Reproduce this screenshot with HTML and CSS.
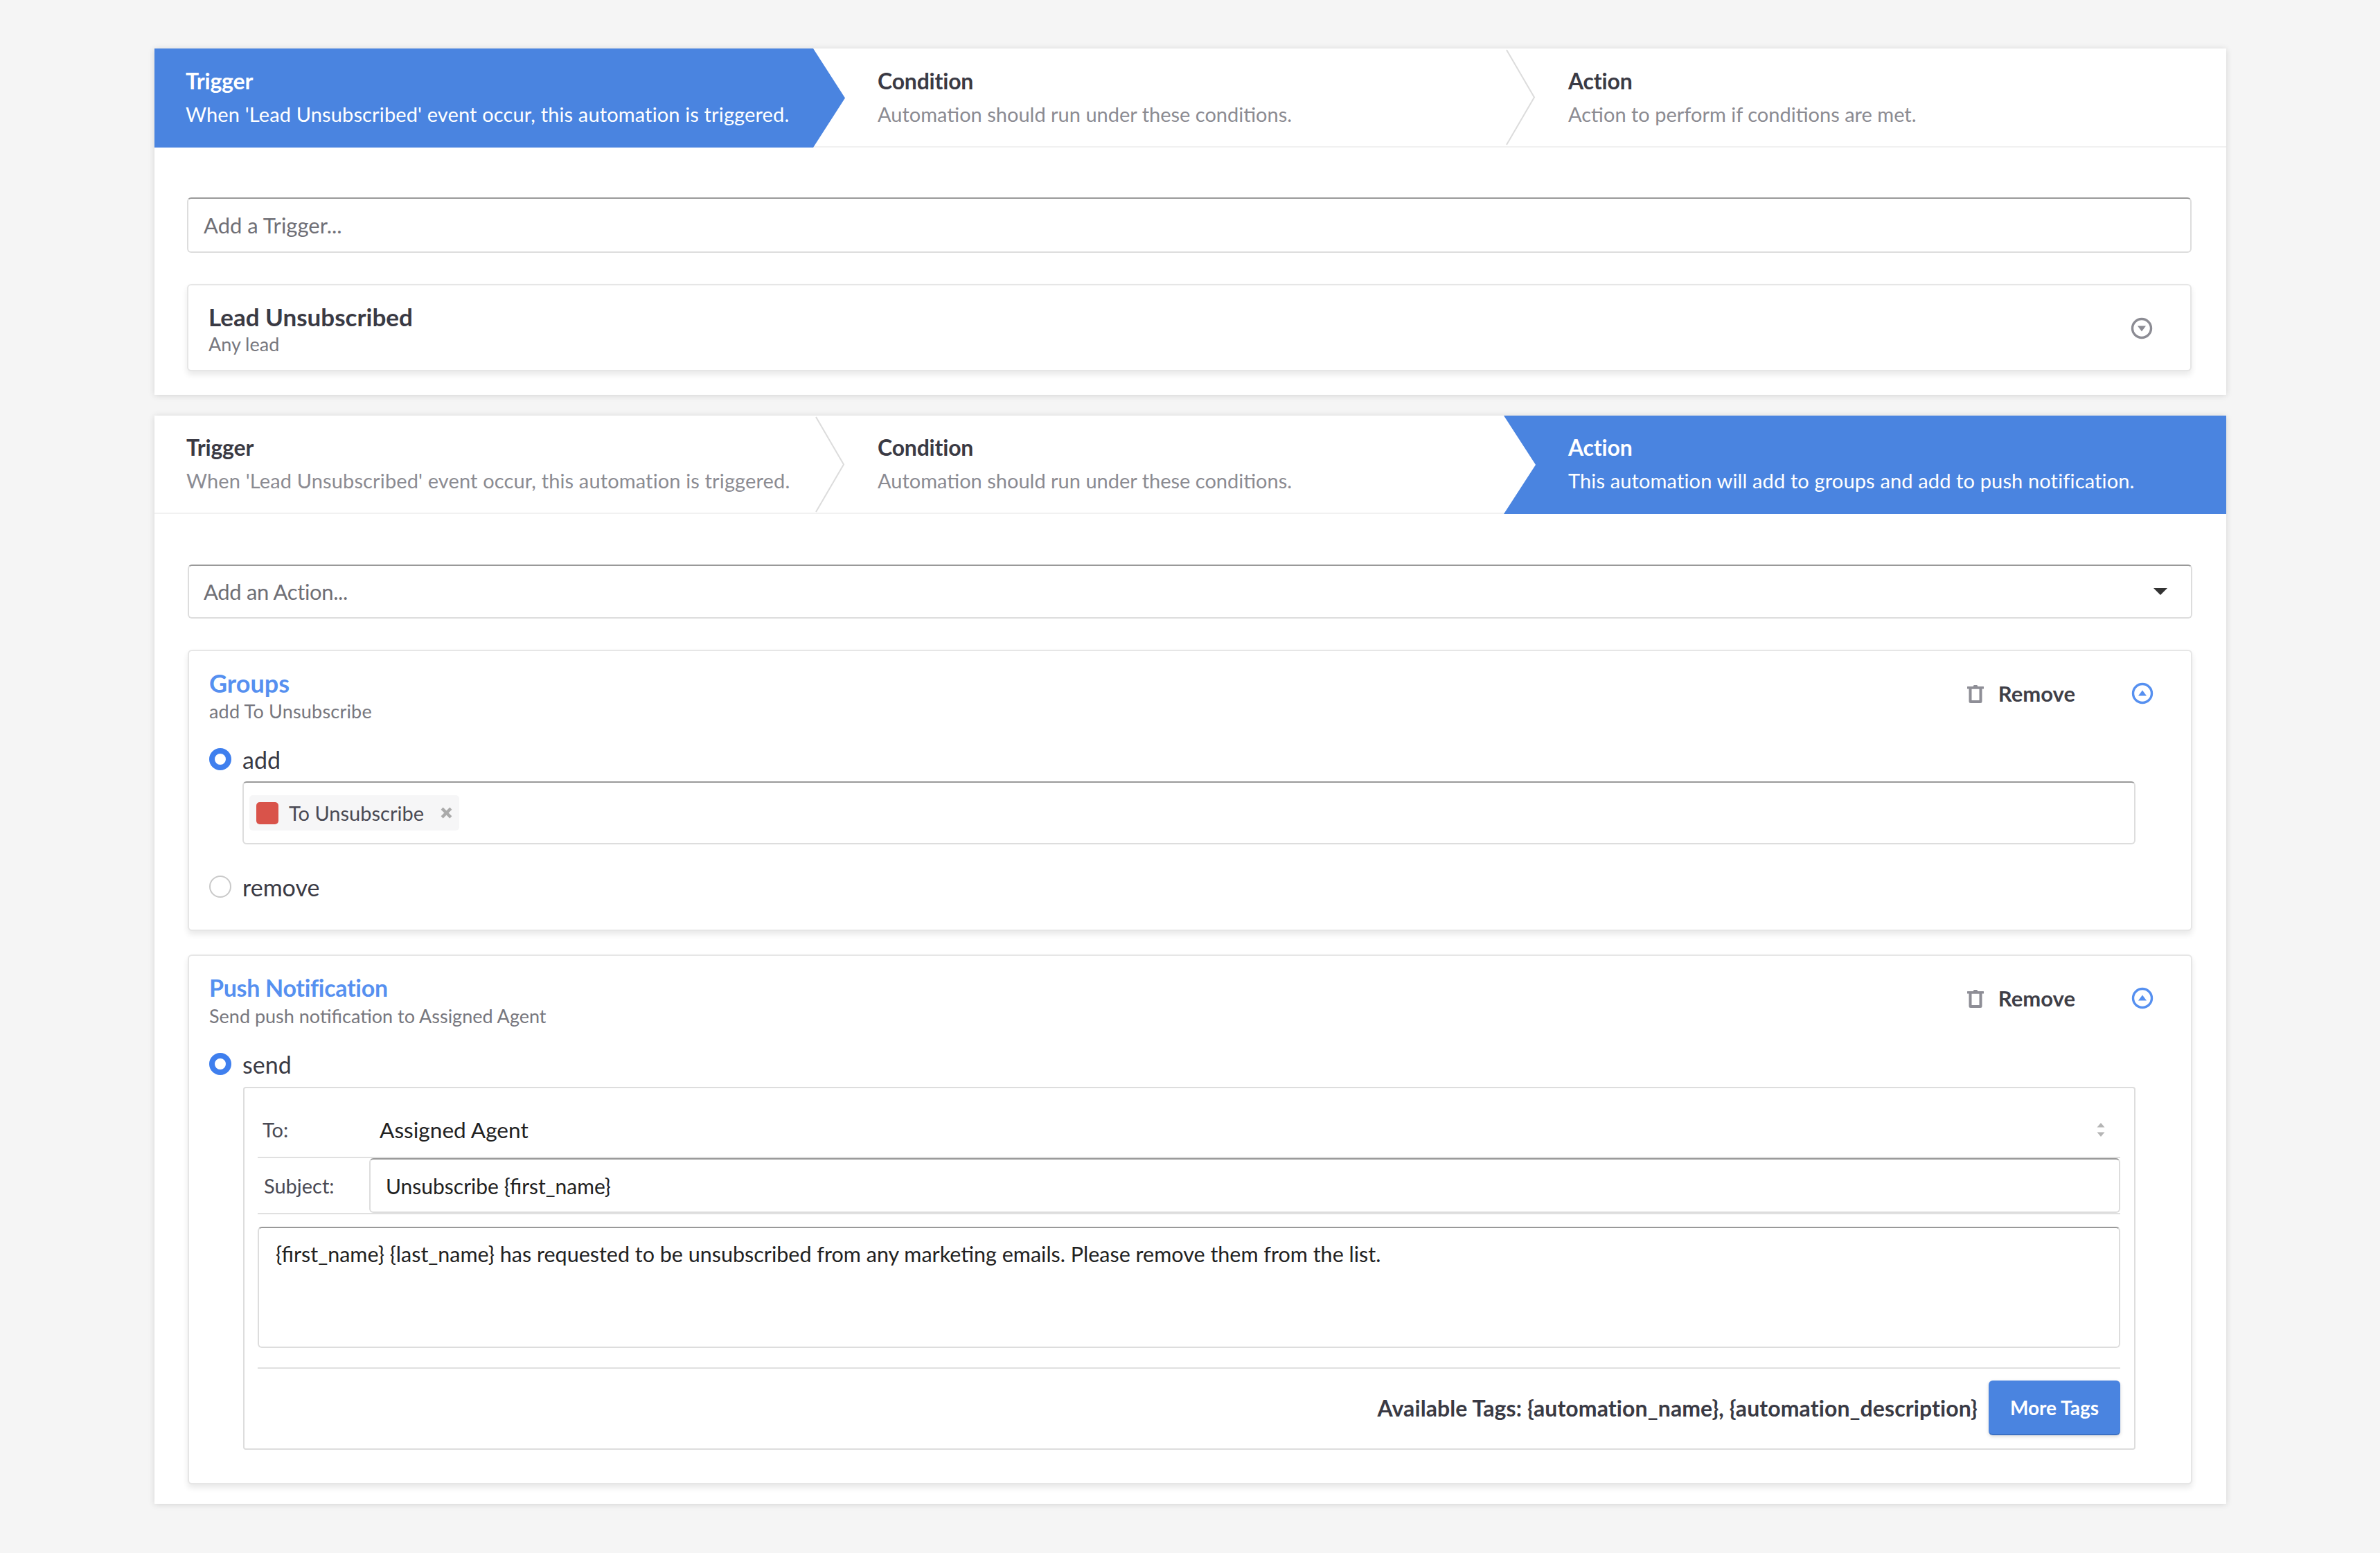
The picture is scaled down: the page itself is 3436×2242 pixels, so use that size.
FILE: index.html
```html
<!DOCTYPE html>
<html lang="en">
<head>
<meta charset="utf-8">
<title>Automation</title>
<link rel="stylesheet" href="styles.css">
</head>
<body>
<main class="page">
  <section class="panel">
    <div class="steps steps-tall">
      <div class="step step-first step-on">
        <div class="step-title">Trigger</div>
        <div class="step-desc step-desc-long">When 'Lead Unsubscribed' event occur, this automation is triggered.</div>
      </div>
      <div class="step">
        <div class="step-title">Condition</div>
        <div class="step-desc">Automation should run under these conditions.</div>
        <svg class="chev" viewBox="0 0 46 142" preserveAspectRatio="none"><path d="M3 2 L43 71 L3 140"/></svg>
      </div>
      <div class="step">
        <div class="step-title">Action</div>
        <div class="step-desc">Action to perform if conditions are met.</div>
      </div>
    </div>
    <div class="body body-one">
      <div class="field field-trigger">Add a Trigger...</div>
      <div class="card card-lead">
        <div class="card-head">
          <div class="head-text">
            <div class="card-title title-lead">Lead Unsubscribed</div>
            <div class="card-sub">Any lead</div>
          </div>
          <svg class="toggle toggle-grey" viewBox="0 0 32 32"><circle cx="16" cy="16" r="13.5"/><path class="tri" d="M10 12.5h12l-6 8z"/></svg>
        </div>
      </div>
    </div>
  </section>

  <section class="panel">
    <div class="steps">
      <div class="step">
        <div class="step-title">Trigger</div>
        <div class="step-desc step-desc-long">When 'Lead Unsubscribed' event occur, this automation is triggered.</div>
        <svg class="chev" viewBox="0 0 46 142" preserveAspectRatio="none"><path d="M3 2 L43 71 L3 140"/></svg>
      </div>
      <div class="step">
        <div class="step-title">Condition</div>
        <div class="step-desc">Automation should run under these conditions.</div>
      </div>
      <div class="step step-last step-on">
        <div class="step-title">Action</div>
        <div class="step-desc step-desc-long">This automation will add to groups and add to push notification.</div>
      </div>
    </div>
    <div class="body body-two">
      <div class="field field-action">
        <span>Add an Action...</span>
        <svg class="caret" viewBox="0 0 20 10"><path d="M0 0h20L10 10z"/></svg>
      </div>

      <div class="card card-groups">
        <div class="card-head">
          <div class="head-text">
            <div class="card-title card-title-blue">Groups</div>
            <div class="card-sub card-sub-wide">add To Unsubscribe</div>
          </div>
          <div class="head-tools">
            <svg class="trash" viewBox="0 0 24 27"><path d="M9 3V2.400C9 1.600 9.600 1 10.400 1h3.200c.8 0 1.400.6 1.400 1.400V3h8a1 1 0 0 1 0 3.400H1A1 1 0 0 1 1 3z"/><path d="M2.500 5h19v19.500a2.500 2.500 0 0 1-2.500 2.500H5a2.500 2.500 0 0 1-2.500-2.500zM6.500 6.500v16.500h11V6.500z" fill-rule="evenodd"/></svg>
            <span class="remove">Remove</span>
            <svg class="toggle toggle-blue" viewBox="0 0 32 32"><circle cx="16" cy="16" r="13.5"/><path class="tri" d="M10 19.500h12l-6-8z"/></svg>
          </div>
        </div>
        <div class="opts">
          <label class="opt opt-first"><i class="radio radio-on"></i>add</label>
          <div class="tags-box">
            <span class="tag"><i class="swatch"></i><span class="tag-text">To Unsubscribe</span>
              <svg class="tag-x" viewBox="0 0 16 16"><path d="M2 2l12 12M14 2L2 14"/></svg>
            </span>
          </div>
          <label class="opt opt-second"><i class="radio"></i>remove</label>
        </div>
      </div>

      <div class="card card-push">
        <div class="card-head">
          <div class="head-text">
            <div class="card-title card-title-blue title-push">Push Notification</div>
            <div class="card-sub">Send push notification to Assigned Agent</div>
          </div>
          <div class="head-tools">
            <svg class="trash" viewBox="0 0 24 27"><path d="M9 3V2.400C9 1.600 9.600 1 10.400 1h3.200c.8 0 1.400.6 1.400 1.400V3h8a1 1 0 0 1 0 3.400H1A1 1 0 0 1 1 3z"/><path d="M2.500 5h19v19.500a2.500 2.500 0 0 1-2.500 2.500H5a2.500 2.500 0 0 1-2.500-2.500zM6.500 6.500v16.500h11V6.500z" fill-rule="evenodd"/></svg>
            <span class="remove">Remove</span>
            <svg class="toggle toggle-blue" viewBox="0 0 32 32"><circle cx="16" cy="16" r="13.5"/><path class="tri" d="M10 19.500h12l-6-8z"/></svg>
          </div>
        </div>
        <div class="opts">
          <label class="opt opt-first"><i class="radio radio-on"></i>send</label>
          <div class="mail-box">
            <div class="mail-row mail-to">
              <span class="mail-label mail-label-to">To:</span>
              <span class="mail-value">Assigned Agent</span>
              <svg class="spin" viewBox="0 0 12 20"><path d="M6 0l5.500 6.500H.5zM6 20L.5 13.500h11z"/></svg>
            </div>
            <div class="mail-row mail-subject">
              <span class="mail-label mail-label-subject">Subject:</span>
              <div class="subject-input">Unsubscribe {first_name}</div>
            </div>
            <div class="mail-body">{first_name} {last_name} has requested to be unsubscribed from any marketing emails. Please remove them from the list.</div>
            <div class="mail-foot">
              <span class="avail">Available Tags: {automation_name}, {automation_description}</span>
              <span class="more-btn">More Tags</span>
            </div>
          </div>
        </div>
      </div>
    </div>
  </section>
</main>
</body>
</html>
```
FILE: styles.css
```css
* { box-sizing: border-box; }
html, body { margin: 0; padding: 0; }
body {
  background: #f5f5f5;
  font-family: "Lato", "Liberation Sans", sans-serif;
  color: #3a3a44;
}
.page {
  width: 2991px;
  margin-left: 223px;
  padding: 70px 0 70px;
  display: flex;
  flex-direction: column;
  gap: 30px;
}
.panel {
  background: #fff;
  box-shadow: 0 1px 9px rgba(0, 0, 0, .14);
}
.steps {
  display: grid;
  grid-template-columns: repeat(3, 1fr);
  height: 142px;
  border-bottom: 2px solid #f1f1f1;
}
.steps-tall { height: 143px; }
.step {
  position: relative;
  padding: 22px 0 0 46px;
  min-width: 0;
}
.step:nth-child(n+2) { padding-left: 47px; }
.steps-tall .step { padding-top: 23px; }
.step-title {
  font-size: 32px;
  font-weight: 700;
  line-height: 48px;
  color: #3a3a44;
  letter-spacing: -.2px;
}
.step-desc {
  font-size: 29px;
  line-height: 48px;
  color: #8b8b92;
  white-space: nowrap;
}
.step-desc-long { letter-spacing: .14px; }
.step-on {
  background: #4a84e0;
  margin-bottom: -2px;
}
.step-on .step-title, .step-on .step-desc { color: #fff; }
.step-first {
  padding-left: 45px;
  clip-path: polygon(0 0, calc(100% - 46px) 0, 100% 50%, calc(100% - 46px) 100%, 0 100%);
}
.step-last {
  margin-left: -46px;
  padding-left: 93px !important;
  clip-path: polygon(0 0, 100% 0, 100% 100%, 0 100%, 46px 50%);
}
.chev {
  position: absolute;
  top: 0;
  right: -1px;
  width: 46px;
  height: 141px;
  fill: none;
  stroke: #dcdcdc;
  stroke-width: 2;
}
.body-one { padding: 72px 50px 34px 47px; }
.body-two { padding: 73px 49px 28px 48px; }
.field {
  display: flex;
  align-items: center;
  justify-content: space-between;
  background: #fff;
  border: 2px solid #ddd;
  border-top-color: #999;
  border-radius: 6px;
  padding: 0 22px;
  font-size: 31px;
  color: #6f6f76;
}
.field-trigger { height: 80px; }
.field-action {
  height: 78px;
  padding: 0 34px 0 21px;
  letter-spacing: -.35px;
}
.caret { width: 20px; height: 10px; fill: #333; }
.card {
  background: #fff;
  border: 2px solid #e6e6e6;
  border-radius: 6px;
  box-shadow: 0 5px 9px rgba(0, 0, 0, .09);
}
.card-lead { margin-top: 45px; height: 126px; }
.card-groups { margin-top: 45px; height: 406px; }
.card-push { margin-top: 34px; height: 765px; }
.card-head {
  display: flex;
  justify-content: space-between;
  align-items: flex-start;
  padding: 24px 54px 0 29px;
}
.card-lead .card-head { padding-top: 23px; align-items: center; }
.head-tools {
  display: flex;
  align-items: center;
  height: 70px;
  margin-top: 2px;
}
.card-title {
  font-size: 36px;
  font-weight: 700;
  line-height: 44px;
  color: #3a3a44;
}
.title-lead { font-size: 35px; }
.title-push { font-size: 34px; letter-spacing: -.3px; }
.card-title-blue { color: #5690f0; }
.card-sub {
  font-size: 27px;
  line-height: 38px;
  color: #77777e;
}
.card-lead .card-sub { line-height: 36px; }
.card-sub-wide { letter-spacing: .2px; }
.toggle { width: 32px; height: 32px; display: block; }
.toggle circle { fill: none; stroke-width: 3.4; }
.toggle-grey circle { stroke: #8c8c94; }
.toggle-grey .tri { fill: #8c8c94; }
.toggle-blue circle { stroke: #5690f0; }
.toggle-blue .tri { fill: #5690f0; }
.toggle-grey { margin-top: -2px; }
.trash { width: 24px; height: 27px; fill: #8e8e96; }
.remove {
  font-size: 31px;
  font-weight: 700;
  color: #3f3f48;
  margin: 0 81px 0 21px;
}
.opts { padding: 0 80px 0 29px; }
.opt {
  display: flex;
  align-items: center;
  height: 44px;
  font-size: 34px;
  color: #3a3a44;
}
.opt-first { margin-top: 28px; }
.opt-second { margin-top: 39px; }
.radio {
  width: 32px;
  height: 32px;
  border-radius: 50%;
  border: 2px solid #c9c9c9;
  background: #fff;
  margin-right: 16px;
  flex: none;
}
.radio-on { border: 8px solid #3f7fee; }
.tags-box {
  margin: 10px 0 0 48px;
  height: 91px;
  border: 2px solid #ddd;
  border-top-color: #999;
  border-radius: 6px;
  padding: 18px 8px;
}
.tag {
  display: inline-flex;
  align-items: center;
  height: 51px;
  background: #f6f6f7;
  border-radius: 5px;
  padding: 0 10px;
  font-size: 29px;
  color: #4a4a54;
}
.swatch {
  width: 32px;
  height: 32px;
  background: #d9534a;
  border-radius: 5px;
  margin-right: 15px;
}
.tag-text { margin-right: 24px; }
.tag-x { width: 17px; height: 17px; fill: none; stroke: #aaa; stroke-width: 4; }
.mail-box {
  margin: 11px 0 0 49px;
  height: 524px;
  border: 2px solid #ddd;
  border-radius: 4px;
  padding: 0 20px 0 19px;
}
.mail-row { display: flex; align-items: center; }
.mail-to {
  height: 101px;
  padding-top: 20px;
  border-bottom: 2px solid #e0e0e0;
}
.mail-subject {
  height: 81px;
  border-bottom: 2px solid #e0e0e0;
}
.mail-label { font-size: 29px; color: #4a4a54; }
.mail-label-to { width: 176px; padding-left: 7px; flex: none; }
.mail-label-subject { width: 161px; padding-left: 9px; flex: none; }
.mail-value { font-size: 31.6px; color: #222; flex: 1; }
.spin { width: 12px; height: 20px; fill: #b5b5b5; margin-right: 22px; }
.subject-input {
  flex: 1;
  height: 79px;
  display: flex;
  align-items: center;
  border: 2px solid #ddd;
  border-top-color: #999;
  border-radius: 6px;
  padding-left: 22px;
  font-size: 30px;
  color: #222;
}
.mail-body {
  margin-top: 18px;
  height: 175px;
  border: 2px solid #ddd;
  border-top-color: #999;
  border-radius: 6px;
  padding: 17px 24px;
  font-size: 30.5px;
  line-height: 40px;
  color: #222;
}
.mail-foot {
  margin-top: 28px;
  border-top: 2px solid #e0e0e0;
  padding-top: 17px;
  display: flex;
  justify-content: flex-end;
  align-items: center;
  gap: 16px;
}
.avail { font-size: 32px; font-weight: 700; color: #3a3a44; letter-spacing: .1px; }
.more-btn {
  width: 190px;
  height: 79px;
  display: flex;
  align-items: center;
  justify-content: center;
  background: #4a84e0;
  border-bottom: 2px solid #3b70c4;
  border-radius: 6px;
  color: #fff;
  font-size: 28px;
  font-weight: 700;
  box-shadow: 0 2px 5px rgba(0, 0, 0, .15);
}
```
